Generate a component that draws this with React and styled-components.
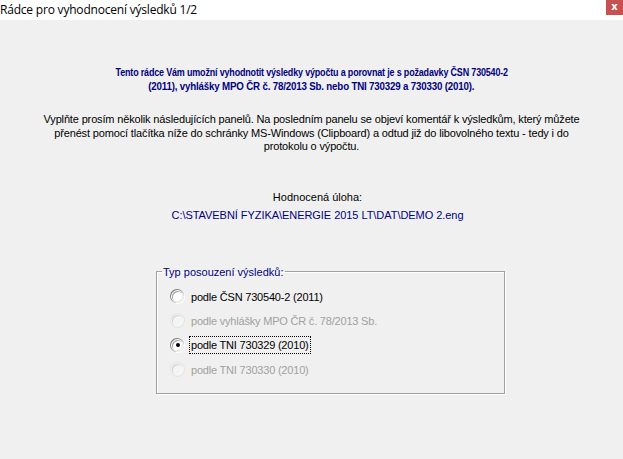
import React from "react";
import styled, { createGlobalStyle } from "styled-components";

const Global = createGlobalStyle`
  html, body { margin: 0; padding: 0; background: #f0f0f0; }
  body { width: 623px; height: 459px; overflow: hidden; font-family: "Liberation Sans", Arial, sans-serif; }
`;

const Window = styled.div`
  width: 623px;
  height: 459px;
  display: flex;
  flex-direction: column;
  background: #f0f0f0;
`;

const TitleBar = styled.div`
  height: 20px;
  background: #ffffff;
  display: flex;
  align-items: flex-start;
  justify-content: space-between;
  flex-shrink: 0;
`;

const Title = styled.div`
  font-family: "Open Sans", "Noto Sans", sans-serif;
  font-size: 12px;
  line-height: 19px;
  color: #000;
  letter-spacing: -0.2px;
`;

const CloseBtn = styled.div`
  width: 17px;
  height: 15px;
  background: #c75050;
  color: #fff;
  font-family: "DejaVu Sans", sans-serif;
  font-weight: bold;
  font-size: 10px;
  line-height: 14px;
  text-align: center;
`;

const Body = styled.div`
  display: flex;
  flex-direction: column;
  align-items: center;
  padding-top: 45px;
  color: #000;
  font-size: 11px;
`;

const Heading = styled.div`
  display: flex;
  flex-direction: column;
  align-items: center;
  font-weight: bold;
  color: #000080;
  line-height: 14px;
  font-size: 11px;
  letter-spacing: -0.2px;
`;

const HeadingLine = styled.div`
  white-space: nowrap;
  transform: scaleX(${(p) => p.$scale});
`;

const Para = styled.div`
  margin-top: 20px;
  text-align: center;
  line-height: 13.5px;
  font-size: 11px;
  letter-spacing: -0.15px;
`;

const Label = styled.div`
  margin-top: ${(p) => p.$top || 0}px;
  padding-left: 12px;
  text-align: center;
  line-height: 14px;
  color: ${(p) => p.$color || "#000"};
  letter-spacing: ${(p) => p.$ls || "0"};
`;

const GroupWrap = styled.div`
  align-self: stretch;
  padding-left: 156px;
  margin-top: 43px;
`;

const Group = styled.fieldset`
  width: 333px;
  margin: 0;
  padding: 6px 0 11px 14px;
  border: 1px solid #a0a0a0;
  box-shadow: 1px 1px 0 #fff, inset 1px 1px 0 #fff;
  box-sizing: content-box;
  min-inline-size: 0;
`;

const Legend = styled.legend`
  margin-left: -9px;
  padding: 0 2px 0 1px;
  color: #000080;
  font-size: 11px;
  line-height: 14px;
  letter-spacing: 0px;
`;

const Row = styled.div`
  height: ${(p) => p.$h}px;
  display: flex;
  align-items: center;
  gap: 5px;
  color: ${(p) => (p.$disabled ? "#a0a0a0" : "#000")};
  letter-spacing: -0.2px;
  font-size: 11px;
`;

const Circle = styled.span`
  width: 11px;
  height: 11px;
  border-radius: 50%;
  background: ${(p) => (p.$disabled ? "#f4f4f4" : "#fff")};
  border: 1px solid transparent;
  box-shadow: ${(p) =>
    p.$disabled
      ? "inset 1px 1px 0 #d4d4d4, inset -1px -1px 0 #f8f8f8, 0 0 0 1px #e4e4e4"
      : "inset 1px 1px 0 #a8a8a8, inset -1px -1px 0 #e8e8e8, -0.5px -0.5px 0 0.5px #808080, 0.5px 0.5px 0 0.5px #ffffff"};
  display: flex;
  align-items: center;
  justify-content: center;
  flex-shrink: 0;
`;

const Dot = styled.span`
  width: 4px;
  height: 4px;
  border-radius: 50%;
  background: #000;
`;

const Text = styled.span`
  padding: 1px 1px;
  line-height: 14px;
  border: 1px dotted ${(p) => (p.$focus ? "#000" : "transparent")};
`;

const options = [
  { t: "podle ČSN 730540-2 (2011)", h: 24 },
  { t: "podle vyhlášky MPO ČR č. 78/2013 Sb.", h: 24, d: true },
  { t: "podle TNI 730329 (2010)", h: 25, c: true },
  { t: "podle TNI 730330 (2010)", h: 24, d: true },
];

export default function App() {
  return (
    <Window>
      <Global />
      <TitleBar>
        <Title>Rádce pro vyhodnocení výsledků 1/2</Title>
        <CloseBtn>x</CloseBtn>
      </TitleBar>
      <Body>
        <Heading>
          <HeadingLine $scale={0.815}>
            Tento rádce Vám umožní vyhodnotit výsledky výpočtu a porovnat je s požadavky ČSN 730540-2
          </HeadingLine>
          <HeadingLine $scale={0.885}>
            (2011), vyhlášky MPO ČR č. 78/2013 Sb. nebo TNI 730329 a 730330 (2010).
          </HeadingLine>
        </Heading>
        <Para>
          Vyplňte prosím několik následujících panelů. Na posledním panelu se objeví komentář k výsledkům, který můžete
          <br />
          přenést pomocí tlačítka níže do schránky MS-Windows (Clipboard) a odtud již do libovolného textu - tedy i do
          <br />
          protokolu o výpočtu.
        </Para>
        <Label $top={36}>Hodnocená úloha:</Label>
        <Label $top={4} $color="#000080" $ls="-0.05px">
          C:\STAVEBNÍ FYZIKA\ENERGIE 2015 LT\DAT\DEMO 2.eng
        </Label>
        <GroupWrap>
          <Group>
            <Legend>Typ posouzení výsledků:</Legend>
            {options.map((o) => (
              <Row key={o.t} $h={o.h} $disabled={o.d}>
                <Circle $disabled={o.d}>{o.c && <Dot />}</Circle>
                <Text $focus={o.c}>{o.t}</Text>
              </Row>
            ))}
          </Group>
        </GroupWrap>
      </Body>
    </Window>
  );
}
